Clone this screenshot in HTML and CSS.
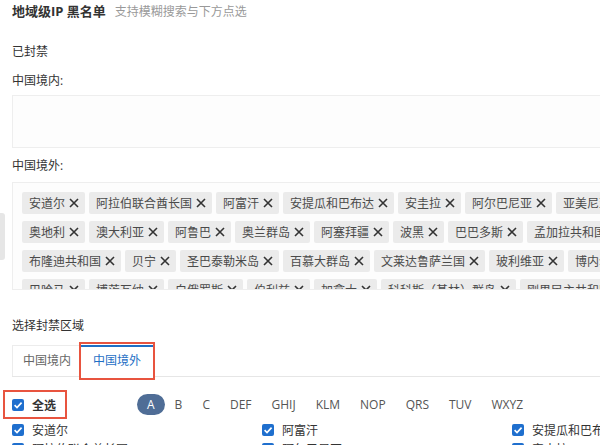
FILE: index.html
```html
<!DOCTYPE html>
<html lang="zh-CN">
<head>
    <meta charset="UTF-8">
    <meta name="viewport" content="width=device-width, initial-scale=1.0">
    <title>地域级IP 黑名单</title>
    <link rel="stylesheet" href="styles.css">
</head>
<body>
    <div class="side-handle"></div>
    <div class="page">
        <div class="title"><b>地域级IP 黑名单</b><span class="hint">支持模糊搜索与下方点选</span></div>

        <div class="section">已封禁</div>
        <div class="label">中国境内:</div>
        <div class="tag-box tag-box-small"></div>

        <div class="label label-out">中国境外:</div>
        <div class="tag-box" id="blockedOut"></div>

        <div class="section section-pick">选择封禁区域</div>
        <div class="tabs">
            <div class="tab">中国境内</div>
            <div class="tab active marked">中国境外</div>
        </div>

        <div class="filter-row">
            <label class="check-all marked"><span class="check"></span>全选</label>
            <div class="letters">
                <span class="letter current">A</span>
                <span class="letter">B</span>
                <span class="letter">C</span>
                <span class="letter">DEF</span>
                <span class="letter">GHIJ</span>
                <span class="letter">KLM</span>
                <span class="letter">NOP</span>
                <span class="letter">QRS</span>
                <span class="letter">TUV</span>
                <span class="letter">WXYZ</span>
            </div>
        </div>

        <div class="country-grid" id="countryGrid"></div>
    </div>

    <script>
        const blocked = [
            '安道尔', '阿拉伯联合酋长国', '阿富汗', '安提瓜和巴布达', '安圭拉', '阿尔巴尼亚', '亚美尼亚',
            '奥地利', '澳大利亚', '阿鲁巴', '奥兰群岛', '阿塞拜疆', '波黑', '巴巴多斯', '孟加拉共和国',
            '布隆迪共和国', '贝宁', '圣巴泰勒米岛', '百慕大群岛', '文莱达鲁萨兰国', '玻利维亚', '博内尔岛',
            '巴哈马', '博茨瓦纳', '白俄罗斯', '伯利兹', '加拿大', '科科斯（基林）群岛', '刚果民主共和国'
        ];
        const listA = ['安道尔', '阿富汗', '安提瓜和巴布达', '阿联酋',
            '阿拉伯联合酋长国', '阿尔巴尼亚', '安圭拉', '安哥拉'];

        const xIcon = '<svg class="x" width="10" height="10" viewBox="0 0 10 10"><path d="M1 1L9 9M9 1L1 9" stroke="#333" stroke-width="1.6" fill="none"/></svg>';
        const checkIcon = '<svg width="10" height="10" viewBox="0 0 10 10"><path d="M1.6 5.2L4 7.5L8.6 2.6" stroke="#fff" stroke-width="1.7" fill="none"/></svg>';

        document.getElementById('blockedOut').innerHTML = blocked
            .map(name => `<span class="tag">${name}${xIcon}</span>`).join('');

        document.getElementById('countryGrid').innerHTML = listA
            .map(name => `<label class="country"><span class="check">${checkIcon}</span>${name}</label>`).join('');

        document.querySelector('.check-all .check').innerHTML = checkIcon;
    </script>
</body>
</html>
```

FILE: styles.css
```css
body {
    font-family: "Open Sans", "Noto Sans CJK SC", sans-serif;
    background-color: #fff;
    color: #333;
    margin: 0;
    overflow: hidden;
    font-size: 12px;
}

.page {
    width: 748px;
    padding-left: 12px;
}

.side-handle {
    position: absolute;
    left: 0;
    top: 213px;
    width: 5px;
    height: 47px;
    background-color: #e6e6e6;
    border-radius: 0 3px 3px 0;
}

.title {
    height: 22px;
    line-height: 22px;
    font-size: 13px;
    color: #333;
}

.title .hint {
    font-size: 12px;
    color: #999;
    margin-left: 9px;
}

.section {
    margin-top: 20px;
    line-height: 20px;
}

.section-pick {
    margin-top: 26px;
}

.label {
    margin-top: 9px;
    line-height: 20px;
}

.label-out {
    margin-top: 8px;
}

.tag-box {
    width: 680px;
    height: 108px;
    margin-top: 6px;
    padding: 9px;
    box-sizing: border-box;
    border: 1px solid #eeeeee;
    background-color: #fdfdfd;
    display: flex;
    flex-wrap: wrap;
    align-content: flex-start;
    gap: 7px 4px;
    overflow: hidden;
}

.tag-box-small {
    height: 53px;
    margin-top: 4px;
}

.tag {
    display: inline-flex;
    align-items: center;
    gap: 4px;
    height: 22px;
    padding: 0 6px 0 7px;
    background-color: #ebebeb;
    border-radius: 2px;
    color: #4a4a4a;
    font-size: 12px;
    white-space: nowrap;
}

.tabs {
    display: flex;
    margin-top: 9px;
    width: 748px;
    border-bottom: 1px solid #e6e6e6;
}

.tab {
    height: 31px;
    line-height: 30px;
    padding: 0 9px 0 10px;
    color: #666;
    border-left: 1px solid #ececec;
    border-top: 1px solid #ececec;
    box-sizing: border-box;
}

.tab.active {
    color: #1f6fc5;
    border-left: none;
    border-top: 2px solid #1f6fc5;
    padding: 0 13px;
    line-height: 28px;
    background: #fff;
    margin-bottom: -1px;
    height: 32px;
}

.marked {
    position: relative;
}

.marked::after {
    content: "";
    position: absolute;
    border: 2px solid #e8543f;
}

.tab.marked::after {
    top: -5px;
    bottom: -3px;
    left: -1px;
    right: -1px;
}

.filter-row {
    display: flex;
    align-items: center;
    margin-top: 16px;
}

.check-all {
    display: inline-flex;
    align-items: center;
    gap: 8px;
    height: 23px;
    margin-left: -6px;
    padding: 0 8px 0 6px;
    font-weight: bold;
}

.check-all.marked::after {
    top: -3px;
    bottom: -3px;
    left: -3px;
    right: -3px;
}

.check {
    display: inline-flex;
    align-items: center;
    justify-content: center;
    width: 12px;
    height: 12px;
    background-color: #1f6fce;
    border-radius: 2px;
}

.letters {
    display: flex;
    margin-left: 73px;
}

.letter {
    height: 21px;
    line-height: 21px;
    padding: 0 10px;
    color: #555;
    border-radius: 11px;
}

.letter.current {
    background-color: #4f6d96;
    color: #fff;
}

.country-grid {
    display: grid;
    grid-template-columns: repeat(4, 250px);
    grid-auto-rows: 19px;
    margin-top: 4px;
}

.country {
    display: flex;
    align-items: center;
    gap: 8px;
}
```
